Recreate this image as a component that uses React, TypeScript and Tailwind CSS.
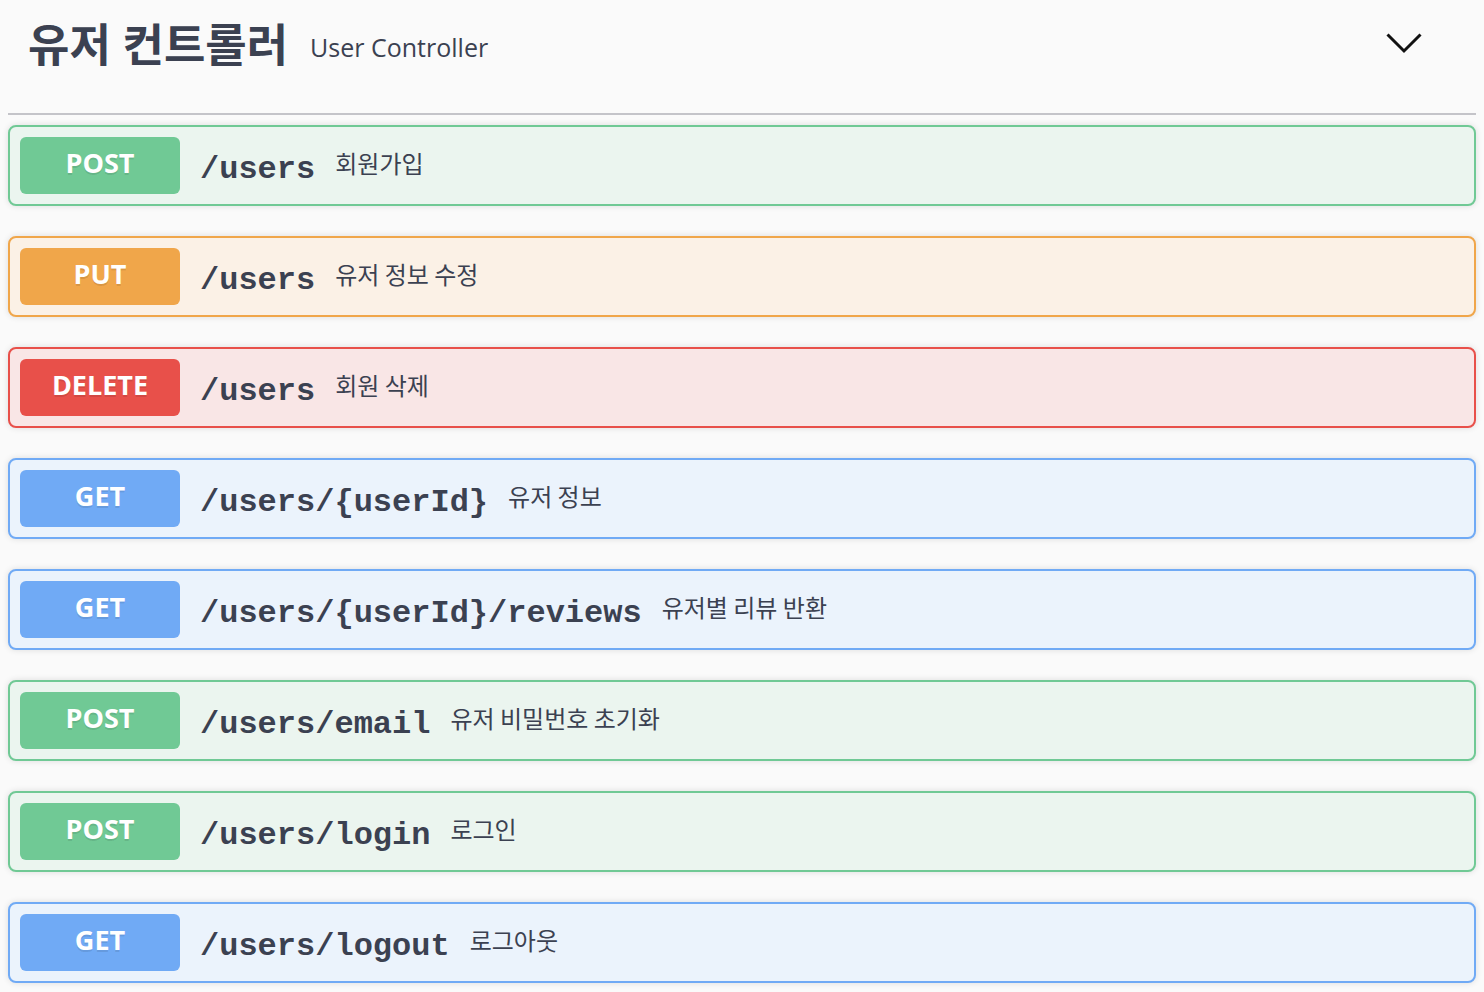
import React from 'react';

type Method = 'POST' | 'PUT' | 'DELETE' | 'GET';

const STYLES: Record<Method, { box: string; badge: string }> = {
  POST: { box: 'border-[#70c995] bg-[#ebf5ef]', badge: 'bg-[#70c995]' },
  PUT: { box: 'border-[#f0a64a] bg-[#fbf1e6]', badge: 'bg-[#f0a64a]' },
  DELETE: { box: 'border-[#e8504a] bg-[#f9e6e6]', badge: 'bg-[#e8504a]' },
  GET: { box: 'border-[#70aaf5] bg-[#ebf3fc]', badge: 'bg-[#70aaf5]' },
};

const ENDPOINTS: { method: Method; path: string; desc: string }[] = [
  { method: 'POST', path: '/users', desc: '회원가입' },
  { method: 'PUT', path: '/users', desc: '유저 정보 수정' },
  { method: 'DELETE', path: '/users', desc: '회원 삭제' },
  { method: 'GET', path: '/users/{userId}', desc: '유저 정보' },
  { method: 'GET', path: '/users/{userId}/reviews', desc: '유저별 리뷰 반환' },
  { method: 'POST', path: '/users/email', desc: '유저 비밀번호 초기화' },
  { method: 'POST', path: '/users/login', desc: '로그인' },
  { method: 'GET', path: '/users/logout', desc: '로그아웃' },
];

const sans = "font-['Open_Sans','Noto_Sans_CJK_KR',sans-serif]";

const App: React.FC = () => {
  return (
    <div className="min-h-screen bg-[#fafafa] text-[#3b4151]">
      <div className="mx-2">
        <div className="flex items-start h-[115px] pt-[13px] pl-[20px] border-b-2 border-[#c4c4c9]">
          <span className={`${sans} text-[45px] font-bold leading-[64px]`}>유저 컨트롤러</span>
          <span className={`${sans} text-[25px] leading-[64px] ml-[22px] pt-[2px]`}>User Controller</span>
          <svg className="ml-auto mr-[52px] mt-[10px]" width="40" height="40" viewBox="0 0 40 40" fill="none">
            <path d="M3.5 11.5 L20 28 L36.5 11.5" stroke="#111" strokeWidth="3" />
          </svg>
        </div>

        <div className="mt-[10px] flex flex-col gap-[30px]">
          {ENDPOINTS.map((e, i) => (
            <div
              key={i}
              className={`flex items-center border-2 rounded-[8px] p-[10px] shadow-[0_0_6px_rgba(0,0,0,0.12)] ${STYLES[e.method].box}`}
            >
              <div
                className={`${sans} w-[160px] h-[57px] pb-[4px] rounded-[6px] flex items-center justify-center text-white text-[27px] font-bold [text-shadow:0_2px_0_rgba(0,0,0,0.1)] ${STYLES[e.method].badge}`}
              >
                {e.method}
              </div>
              <span className="ml-[20px] mt-[8px] font-['Liberation_Mono','Courier_New',monospace] font-bold text-[32px] leading-none">
                {e.path}
              </span>
              <span className="ml-[20px] mb-[6px] font-['Noto_Sans_CJK_KR',sans-serif] text-[24px] leading-none">
                {e.desc}
              </span>
            </div>
          ))}
        </div>
      </div>
    </div>
  );
};

export default App;
